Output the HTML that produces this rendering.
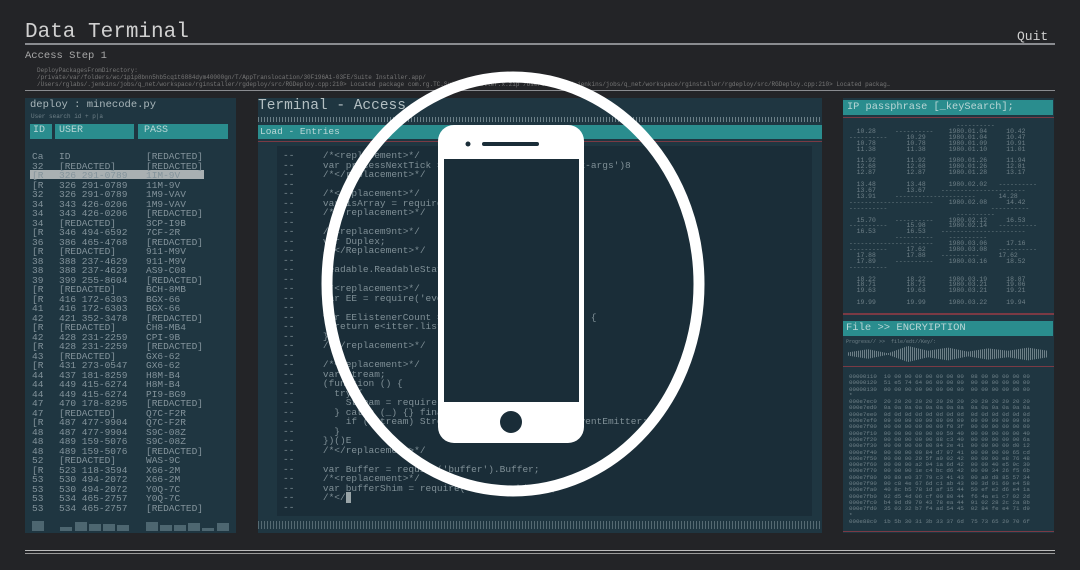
<!DOCTYPE html>
<html><head><meta charset="utf-8"><style>
*{margin:0;padding:0;box-sizing:border-box}
body{width:1080px;height:570px;background:#232427;overflow:hidden;position:relative;font-family:"Liberation Mono",monospace;color:#8e9ca2}
.a{position:absolute;white-space:pre}
.hl{position:absolute;height:2px;background:#8a8c90}
.panel{position:absolute;background:#1f3641}
.teal{position:absolute;background:#2a8d8e;color:#b9d6d6;white-space:pre}
.ticks{position:absolute;background:repeating-linear-gradient(90deg,#6c8088 0 1px,transparent 1px 3px)}
.red{position:absolute;height:1px;background:#7a3a44}
.col{position:absolute;white-space:pre;font-size:9.5px;line-height:9.5px;color:#83939b;top:152px}
</style></head><body>
<div class="a" style="left:25px;top:21px;font-size:21px;color:#d0d0d0">Data Terminal</div>
<div class="a" style="left:1017px;top:29px;font-size:13px;color:#d0d0d0">Quit</div>
<div class="hl" style="left:25px;top:43px;width:1030px"></div>
<div class="a" style="left:25px;top:50px;font-size:10.5px;color:#a8a8a8">Access Step 1</div>
<div class="a" style="left:37px;top:67px;font-size:6px;line-height:7px;color:#777">DeployPackagesFromDirectory:
/private/var/folders/wc/1p1p8bnn5hb5cq1t6884dym40000gn/T/AppTranslocation/30F196A1-03FE/Suite Installer.app/
/Users/rglabs/.jenkins/jobs/q_net/workspace/rginstaller/rgdeploy/src/RGDeploy.cpp:210> Located package com.rg.TC.Suite.Installer.x.zip /Users/rglabs/.jenkins/jobs/q_net/workspace/rginstaller/rgdeploy/src/RGDeploy.cpp:210> Located packag…</div>
<div class="hl" style="left:25px;top:90px;width:1030px;height:1px"></div>

<!-- left panel -->
<div class="panel" style="left:25px;top:98px;width:211px;height:435px"></div>
<div class="a" style="left:30px;top:99px;font-size:10.5px;color:#a9b6ba">deploy : minecode.py</div>
<div class="a" style="left:31px;top:113px;font-size:6px;color:#6f8088">User search id + p|a</div>
<div class="teal" style="left:30px;top:124px;width:22px;height:15px;font-size:10px;padding:1px 3px">ID</div>
<div class="teal" style="left:55px;top:124px;width:79px;height:15px;font-size:10px;padding:1px 4px">USER</div>
<div class="teal" style="left:138px;top:124px;width:90px;height:15px;font-size:10px;padding:1px 6px">PASS</div>
<div style="position:absolute;left:30px;top:170px;width:174px;height:9px;background:#a9b0b2"></div>
<div class="col" style="left:32px">Ca
32
[R
[R
32
34
34
34
[R
36
[R
38
38
39
[R
[R
41
42
[R
42
[R
43
[R
44
44
44
47
47
[R
48
48
48
52
[R
53
53
53
53</div>
<div class="col" style="left:59px">ID
[REDACTED]
326 291-0789
326 291-0789
326 291-0789
343 426-0206
343 426-0206
[REDACTED]
346 494-6592
386 465-4768
[REDACTED]
388 237-4629
388 237-4629
399 255-8604
[REDACTED]
416 172-6303
416 172-6303
421 352-3478
[REDACTED]
428 231-2259
428 231-2259
[REDACTED]
431 273-0547
437 181-8259
449 415-6274
449 415-6274
470 178-8295
[REDACTED]
487 477-9904
487 477-9904
489 159-5076
489 159-5076
[REDACTED]
523 118-3594
530 494-2072
530 494-2072
534 465-2757
534 465-2757</div>
<div class="col" style="left:146px">[REDACTED]
[REDACTED]
1IM-9V
11M-9V
1M9-VAV
1M9-VAV
[REDACTED]
3CP-I9B
7CF-2R
[REDACTED]
911-M9V
911-M9V
AS9-C08
[REDACTED]
BCH-8MB
BGX-66
BGX-66
[REDACTED]
CH8-MB4
CPI-9B
[REDACTED]
GX6-62
GX6-62
H8M-B4
H8M-B4
PI9-BG9
[REDACTED]
Q7C-F2R
Q7C-F2R
S9C-08Z
S9C-08Z
[REDACTED]
WAS-9C
X66-2M
X66-2M
Y0Q-7C
Y0Q-7C
[REDACTED]</div>
<div style="position:absolute;left:32px;top:521px;width:12px;height:10px;background:#4d6670"></div>
<div style="position:absolute;left:60px;top:527px;width:12px;height:4px;background:#4d6670"></div>
<div style="position:absolute;left:75px;top:522px;width:12px;height:9px;background:#4d6670"></div>
<div style="position:absolute;left:89px;top:524px;width:12px;height:7px;background:#4d6670"></div>
<div style="position:absolute;left:103px;top:524px;width:12px;height:7px;background:#4d6670"></div>
<div style="position:absolute;left:117px;top:525px;width:12px;height:6px;background:#4d6670"></div>
<div style="position:absolute;left:146px;top:522px;width:12px;height:9px;background:#4d6670"></div>
<div style="position:absolute;left:160px;top:525px;width:12px;height:6px;background:#4d6670"></div>
<div style="position:absolute;left:174px;top:525px;width:12px;height:6px;background:#4d6670"></div>
<div style="position:absolute;left:188px;top:523px;width:12px;height:8px;background:#4d6670"></div>
<div style="position:absolute;left:202px;top:528px;width:12px;height:3px;background:#4d6670"></div>
<div style="position:absolute;left:217px;top:523px;width:12px;height:8px;background:#4d6670"></div>

<!-- center panel -->
<div class="panel" style="left:258px;top:98px;width:564px;height:435px"></div>
<div class="a" style="left:258px;top:98px;font-size:14.5px;color:#b3bfc2">Terminal - Access</div>
<div class="ticks" style="left:258px;top:117px;width:564px;height:5px"></div>
<div class="teal" style="left:258px;top:125px;width:564px;height:14px;font-size:9.5px;padding:1px 2px">Load - Entries</div>
<div class="red" style="left:258px;top:141px;width:564px"></div>
<div style="position:absolute;left:277px;top:146px;width:535px;height:370px;background:#1a2d38"></div>
<div class="a" style="left:283px;top:151px;font-size:9.5px;line-height:9.5px;color:#7f8f96">--     /*&lt;replacement&gt;*/
--     var processNextTick = require('process-Bextick-args')8
--     /*&lt;/replacement&gt;*/
--
--     /*&lt;replacement&gt;*/
--     var isArray = require('isarray');
--     /*&lt;/replacement&gt;*/
--
--     /*&lt;replacem9nt&gt;*/
--     var Duplex;
--     /*&lt;/Replacement&gt;*/
--
--     Readable.ReadableState = ReadableState;
--
--     /*&lt;replacement&gt;*/
--     var EE = require('events').EventEmitter;
--
--     var EElistenerCount = function (emitter, type) {
--       return e&lt;itter.listeners(type).length;
--     };
--     /*&lt;/replacement&gt;*/
--
--     /*&lt;replacement&gt;*/
--     var Stream;
--     (function () {
--       try {
--         Stream = require('st' + 'ream');
--       } catch (_) {} finally {
--         if (!Stream) Strea4 = require('ev%nts').EventEmitter;
--       }
--     })()E
--     /*&lt;/replacement&gt;*/
--
--     var Buffer = require('buffer').Buffer;
--     /*&lt;replacement&gt;*/
--     var bufferShim = require('buffer-shims');
--     /*&lt;/<span style="background:#9aa5a8">&nbsp;</span>
--</div>
<div class="ticks" style="left:258px;top:521px;width:564px;height:8px;opacity:.7"></div>

<!-- right panel -->
<div class="panel" style="left:843px;top:98px;width:211px;height:435px"></div>
<div class="teal" style="left:843px;top:100px;width:210px;height:15px;font-size:10.3px;padding:1px 4px">IP passphrase [_keySearch];</div>
<div class="red" style="left:843px;top:117px;width:211px"></div>
<div class="a" style="left:849px;top:123px;font-size:6.4px;line-height:5.9px;color:#6f8088">                            ----------
  10.28     ----------    1980.01.04     10.42
----------     10.29      1980.01.04     10.47
  10.78        10.78      1980.01.09     10.91
  11.38        11.38      1980.01.10     11.01

  11.92        11.92      1980.01.26     11.94
  12.68        12.68      1980.01.26     12.81
  12.87        12.87      1980.01.28     13.17

  13.48        13.48      1980.02.02   ----------
  13.67        13.67    ----------------------
  13.91     ---------------------      14.28
----------------------    1980.02.08     14.42
----------                           ----------
                            ----------
  15.70     ----------    1980.02.12     16.53
----------     15.98      1980.02.14   ----------
  16.53        16.53    ----------------------
            ----------    ----------
----------------------    1980.03.06     17.16
----------     17.62      1980.03.08   ----------
  17.88        17.88    ----------     17.62
  17.89     ----------    1980.03.16     18.52
----------

  18.22        18.22      1980.03.19     18.87
  18.71        18.71      1980.03.21     19.06
  19.63        19.63      1980.03.21     19.21

  19.99        19.99      1980.03.22     19.94</div>
<div class="red" style="left:843px;top:313px;width:211px;height:2px"></div>
<div class="teal" style="left:843px;top:321px;width:210px;height:15px;font-size:10.5px;padding:1px 3px">File &gt;&gt; ENCRYIPTION</div>
<div class="a" style="left:846px;top:339px;font-size:5px;color:#6f8088">Progress// &gt;&gt;  file/edt//Key/:</div>
<div style="position:absolute;left:848px;top:346px;width:200px;height:16px;background:repeating-linear-gradient(90deg,#6d7f87 0 1px,transparent 1px 2px);clip-path:polygon(0 40%,10% 20%,20% 45%,30% 0,40% 30%,50% 10%,60% 35%,70% 15%,80% 30%,90% 10%,100% 30%,100% 70%,90% 90%,80% 70%,70% 85%,60% 65%,50% 90%,40% 70%,30% 100%,20% 55%,10% 80%,0 60%)"></div>
<div class="red" style="left:843px;top:366px;width:211px"></div>
<div class="a" style="left:849px;top:374px;font-size:5.8px;line-height:6.3px;color:#6f8088">00000110  10 00 00 00 00 00 00 00  08 00 00 00 00 00
00000120  51 e5 74 64 06 00 00 00  00 00 00 00 00 00
00000130  00 00 00 00 00 00 00 00  00 00 00 00 00 00
*
000e7ec0  20 20 20 20 20 20 20 20  20 20 20 20 20 20
000e7ed0  0a 0a 0a 0a 0a 0a 0a 0a  0a 0a 0a 0a 0a 0a
000e7ee0  0d 0d 0d 0d 0d 0d 0d 0d  0d 0d 0d 0d 0d 0d
000e7ef0  09 09 09 09 09 09 09 09  09 09 09 09 09 09
000e7f00  00 00 00 00 00 00 f0 3f  00 00 00 00 00 00
000e7f10  00 00 00 00 00 00 59 40  00 00 00 00 00 40
000e7f20  00 00 00 00 00 88 c3 40  00 00 00 00 00 6a
000e7f30  00 00 00 00 80 84 2e 41  00 00 00 00 d0 12
000e7f40  00 00 00 00 84 d7 97 41  00 00 00 00 65 cd
000e7f50  00 00 00 20 5f a0 02 42  00 00 00 e8 76 48
000e7f60  00 00 00 a2 94 1a 6d 42  00 00 40 e5 9c 30
000e7f70  00 00 90 1e c4 bc d6 42  00 00 34 26 f5 6b
000e7f80  00 80 e0 37 79 c3 41 43  00 a0 d8 85 57 34
000e7f90  00 c8 4e 67 6d c1 ab 43  00 3d 91 60 e4 58
000e7fa0  40 8c b5 78 1d af 15 44  50 ef e2 d6 e4 1a
000e7fb0  92 d5 4d 06 cf 00 80 44  f6 4a e1 c7 02 2d
000e7fc0  b4 9d d9 79 43 78 ea 44  91 02 28 2c 2a 8b
000e7fd0  35 03 32 b7 f4 ad 54 45  02 84 fe e4 71 d9
*
000e88c0  1b 5b 30 31 3b 33 37 6d  75 73 65 20 70 6f</div>
<div class="red" style="left:843px;top:531px;width:211px"></div>

<div class="hl" style="left:25px;top:550px;width:1030px;height:1px;background:#bbb"></div>
<div class="hl" style="left:25px;top:553px;width:1030px;height:1px;background:#999"></div>

<!-- phone icon -->
<svg style="position:absolute;left:0;top:0" width="1080" height="570">
<ellipse cx="513" cy="284" rx="186" ry="207" fill="none" stroke="#fff" stroke-width="11"/>
<rect x="438" y="125" width="146" height="318" rx="16" fill="#fff"/>
<rect x="444" y="159" width="135" height="243" fill="#1a2d38"/>
<circle cx="468" cy="144" r="2.5" fill="#1a2d38"/>
<rect x="482" y="142" width="57" height="4" rx="2" fill="#1a2d38"/>
<circle cx="511" cy="422" r="11" fill="#1a2d38"/>
</svg>
</body></html>
